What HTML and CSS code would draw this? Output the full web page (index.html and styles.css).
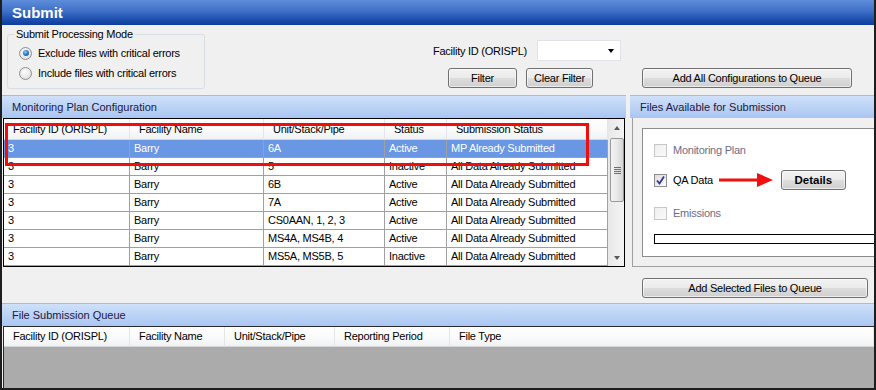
FILE: index.html
```html
<!DOCTYPE html>
<html>
<head>
<meta charset="utf-8">
<link rel="stylesheet" href="styles.css">
</head>
<body>
<div class="window">
  <div class="titlebar">Submit</div>

  <div class="toolbar">
    <div class="groupbox">
      <span class="legend">Submit Processing Mode</span>
      <div class="radio-row"><span class="radio checked"></span><span>Exclude files with critical errors</span></div>
      <div class="radio-row"><span class="radio"></span><span>Include files with critical errors</span></div>
    </div>
    <div class="filters">
      <div class="filter-row">
        <span class="flabel">Facility ID (ORISPL)</span>
        <div class="combo"><span class="combo-arrow"></span></div>
      </div>
      <div class="filter-buttons">
        <div class="btn btn-filter">Filter</div>
        <div class="btn btn-clear">Clear Filter</div>
      </div>
    </div>
    <div class="btn btn-addall">Add All Configurations to Queue</div>
  </div>

  <div class="main">
    <section class="left">
      <div class="panel-head">Monitoring Plan Configuration</div>
      <div class="grid">
        <div class="grid-data">
          <div class="row head">
            <div class="cell">Facility ID (ORISPL)</div>
            <div class="cell">Facility Name</div>
            <div class="cell">Unit/Stack/Pipe</div>
            <div class="cell">Status</div>
            <div class="cell">Submission Status</div>
          </div>
          <div class="row sel">
            <div class="cell">3</div><div class="cell">Barry</div><div class="cell">6A</div><div class="cell">Active</div><div class="cell">MP Already Submitted</div>
          </div>
          <div class="row">
            <div class="cell">3</div><div class="cell">Barry</div><div class="cell">5</div><div class="cell">Inactive</div><div class="cell">All Data Already Submitted</div>
          </div>
          <div class="row">
            <div class="cell">3</div><div class="cell">Barry</div><div class="cell">6B</div><div class="cell">Active</div><div class="cell">All Data Already Submitted</div>
          </div>
          <div class="row">
            <div class="cell">3</div><div class="cell">Barry</div><div class="cell">7A</div><div class="cell">Active</div><div class="cell">All Data Already Submitted</div>
          </div>
          <div class="row">
            <div class="cell">3</div><div class="cell">Barry</div><div class="cell">CS0AAN, 1, 2, 3</div><div class="cell">Active</div><div class="cell">All Data Already Submitted</div>
          </div>
          <div class="row">
            <div class="cell">3</div><div class="cell">Barry</div><div class="cell">MS4A, MS4B, 4</div><div class="cell">Active</div><div class="cell">All Data Already Submitted</div>
          </div>
          <div class="row">
            <div class="cell">3</div><div class="cell">Barry</div><div class="cell">MS5A, MS5B, 5</div><div class="cell">Inactive</div><div class="cell">All Data Already Submitted</div>
          </div>
        </div>
        <div class="scrollbar">
          <div class="sb-btn"><span class="tri-up"></span></div>
          <div class="sb-thumb"><span class="grip"></span></div>
          <div class="sb-track"></div>
          <div class="sb-btn"><span class="tri-down"></span></div>
        </div>
      </div>
    </section>

    <section class="right">
      <div class="panel-head">Files Available for Submission</div>
      <div class="right-body">
        <div class="files-box">
          <div class="file-row r1"><span class="chk disabled"></span><span class="dis-text">Monitoring Plan</span></div>
          <div class="file-row r2">
            <span class="chk checked"><svg width="11" height="11" viewBox="0 0 11 11"><path d="M2 5.5 L4.5 8.5 L9 1.5" fill="none" stroke="#2b3a8f" stroke-width="1.8"/></svg></span>
            <span>QA Data</span>
            <svg class="arrow" width="54" height="16" viewBox="0 0 54 16"><rect x="0" y="6.5" width="40" height="3" fill="#f01010"/><polygon points="38,1 54,8 38,15" fill="#f01010"/></svg>
            <div class="btn btn-details">Details</div>
          </div>
          <div class="file-row r3"><span class="chk disabled"></span><span class="dis-text">Emissions</span></div>
          <div class="progress"></div>
        </div>
      </div>
    </section>
  </div>

  <div class="action-row">
    <div class="btn btn-addsel">Add Selected Files to Queue</div>
  </div>

  <div class="panel-head">File Submission Queue</div>
  <div class="qgrid">
    <div class="row head qhead">
      <div class="cell">Facility ID (ORISPL)</div>
      <div class="cell">Facility Name</div>
      <div class="cell">Unit/Stack/Pipe</div>
      <div class="cell">Reporting Period</div>
      <div class="cell">File Type</div>
    </div>
  </div>

  <div class="highlight"></div>
</div>
</body>
</html>
```

FILE: styles.css
```css
* { box-sizing: border-box; }

body {
  margin: 0;
  font-family: "Liberation Sans", Arial, sans-serif;
  font-size: 11px;
  letter-spacing: -0.25px;
  color: #000;
  background: #f0f0f0;
}

.window {
  position: relative;
  width: 876px;
  height: 390px;
  background: #f0f0f0;
  border-left: 2px solid #1e1e1e;
  border-right: 2px solid #1e1e1e;
  border-bottom: 2px solid #1e1e1e;
  overflow: hidden;
}

.titlebar {
  height: 25px;
  line-height: 25px;
  padding-left: 10px;
  color: #fff;
  font-weight: bold;
  font-size: 15px;
  letter-spacing: 0;
  background: linear-gradient(#5e8ed9 0%, #3f6fc8 45%, #1f51b0 75%, #0e3c9c 100%);
}

/* ---------- toolbar ---------- */
.toolbar {
  height: 70px;
  display: flex;
  align-items: flex-start;
}

.groupbox {
  position: relative;
  margin-left: 5px;
  margin-top: 9px;
  width: 198px;
  height: 55px;
  border: 1px solid #d5dfe5;
  border-radius: 3px;
  padding-top: 8px;
  padding-left: 11px;
}

.legend {
  position: absolute;
  top: -8px;
  left: 6px;
  padding: 0 2px;
  background: #f0f0f0;
  line-height: 14px;
}

.radio-row {
  height: 20px;
  display: flex;
  align-items: center;
}

.radio {
  width: 13px;
  height: 13px;
  border-radius: 50%;
  border: 1px solid #8e8f8f;
  background: radial-gradient(circle at 45% 40%, #ffffff 0%, #e8e8e8 55%, #cfcfcf 100%);
  margin-right: 6px;
  position: relative;
  flex: none;
}

.radio.checked::after {
  content: "";
  position: absolute;
  left: 2.5px;
  top: 2.5px;
  width: 6px;
  height: 6px;
  border-radius: 50%;
  background: radial-gradient(circle at 40% 35%, #8fd0ff 0%, #2f7fce 45%, #0b3c7e 100%);
}

.filters {
  margin-left: 228px;
  margin-top: 15px;
  display: flex;
  flex-direction: column;
}

.filter-row {
  display: flex;
  align-items: center;
  height: 21px;
}

.flabel {
  width: 104px;
}

.combo {
  position: relative;
  width: 84px;
  height: 21px;
  background: #fff;
  border: 1px solid #e2e3ea;
}

.combo-arrow {
  position: absolute;
  right: 6px;
  top: 8px;
  width: 0;
  height: 0;
  border-left: 3.5px solid transparent;
  border-right: 3.5px solid transparent;
  border-top: 4px solid #000;
}

.filter-buttons {
  display: flex;
  margin-top: 7px;
  margin-left: 15px;
}

.btn {
  height: 20px;
  line-height: 18px;
  text-align: center;
  border: 1px solid #707070;
  border-radius: 3px;
  background: linear-gradient(#f2f2f2 0%, #ebebeb 48%, #dddddd 52%, #cfcfcf 100%);
  box-shadow: inset 0 0 0 1px rgba(255,255,255,0.6);
}

.btn-filter { width: 69px; }
.btn-clear { width: 67px; margin-left: 9px; }

.btn-addall {
  width: 210px;
  margin-left: 21px;
  margin-top: 43px;
}

/* ---------- main panels ---------- */
.main {
  height: 172px;
  display: grid;
  grid-template-columns: 624px 244px;
  column-gap: 4px;
}

.panel-head {
  height: 23px;
  line-height: 23px;
  padding-left: 10px;
  color: #1d1840;
  letter-spacing: 0;
  border-top: 1px solid #9dbdf0;
  background: linear-gradient(#cfe0f9 0%, #bcd3f6 50%, #a9c6f2 100%);
}

.grid {
  margin: 0 1px;
  height: 149px;
  border: 1px solid #000;
  display: flex;
  background: #fff;
}

.grid-data {
  width: 604px;
}

.row {
  display: grid;
  grid-template-columns: 126px 134px 121px 62px 161px;
  height: 18px;
  line-height: 17px;
}

.row .cell {
  border-right: 1px solid #a0a0a0;
  border-bottom: 1px solid #a0a0a0;
  padding-left: 4px;
  white-space: nowrap;
  overflow: hidden;
}

.row.head {
  height: 21px;
  line-height: 20px;
}

.row.head .cell {
  padding-left: 9px;
  background: linear-gradient(#ffffff 0%, #fbfbfb 50%, #f1f2f4 100%);
  border-right: 1px solid #e4e5e8;
  border-bottom: 1px solid #d5d5d5;
}

.row.sel .cell {
  background: #6997e4;
  color: #fff;
}

.scrollbar {
  width: 16px;
  display: flex;
  flex-direction: column;
  background: linear-gradient(90deg, #e9e9e9, #f4f4f4);
  border-left: 1px solid #e8e8e8;
}

.sb-btn {
  height: 17px;
  display: flex;
  align-items: center;
  justify-content: center;
}

.tri-up {
  width: 0; height: 0;
  border-left: 3.5px solid transparent;
  border-right: 3.5px solid transparent;
  border-bottom: 4px solid #5a5a5a;
}

.tri-down {
  width: 0; height: 0;
  border-left: 3.5px solid transparent;
  border-right: 3.5px solid transparent;
  border-top: 4px solid #5a5a5a;
}

.sb-thumb {
  margin: 2px 0 0 1px;
  width: 14px;
  height: 64px;
  border: 1px solid #9a9a9a;
  border-radius: 2px;
  background: linear-gradient(90deg, #f4f4f4 0%, #e8e8e8 50%, #d6d6d6 100%);
  display: flex;
  align-items: center;
  justify-content: center;
}

.grip {
  width: 7px;
  height: 7px;
  background: repeating-linear-gradient(#6e6e6e 0 1px, transparent 1px 2px);
}

.sb-track { flex: 1; }

.right-body {
  height: 149px;
  margin-left: 2px;
  border-left: 1px solid #a0a0a0;
  border-bottom: 1px solid #a0a0a0;
  padding-top: 10px;
  padding-left: 9px;
}

.files-box {
  height: 129px;
  background: #fff;
  border: 1px solid #8c8c8c;
  border-right: none;
  padding-top: 11px;
  padding-left: 11px;
  overflow: hidden;
}

.file-row {
  height: 20px;
  display: flex;
  align-items: center;
  white-space: nowrap;
}

.file-row.r2 { margin-top: 10px; }
.file-row.r3 { margin-top: 13px; }

.chk {
  width: 13px;
  height: 13px;
  margin-right: 6px;
  border: 1px solid #8f8f8f;
  background: linear-gradient(135deg, #dcdcdc, #fbfbfb);
  flex: none;
  display: flex;
  align-items: center;
  justify-content: center;
}

.chk.disabled {
  border-color: #c8c8c8;
  background: linear-gradient(135deg, #efefef, #fafafa);
}

.dis-text { color: #6d6d88; }

.arrow {
  margin-left: 6px;
  flex: none;
}

.btn-details {
  width: 65px;
  margin-left: 8px;
  font-weight: bold;
  letter-spacing: 0;
  font-size: 11.5px;
}

.progress {
  margin-top: 11px;
  height: 10px;
  border: 1px solid #000;
  border-right: none;
  background: #fff;
}

/* ---------- bottom ---------- */
.action-row {
  height: 36px;
  display: flex;
  justify-content: flex-end;
  padding-top: 11px;
  padding-right: 6px;
}

.btn-addsel { width: 226px; }

.qgrid {
  height: 62px;
  margin-left: 1px;
  border-top: 1px solid #2a2a2a;
  border-left: 1px solid #2a2a2a;
  background: #ababab;
}

.row.qhead {
  grid-template-columns: 126px 95px 110px 115px 1fr;
  height: 20px;
  line-height: 19px;
}

.highlight {
  position: absolute;
  left: 3px;
  top: 123px;
  width: 584px;
  height: 43px;
  border: 3px solid #f20d0d;
}
```
